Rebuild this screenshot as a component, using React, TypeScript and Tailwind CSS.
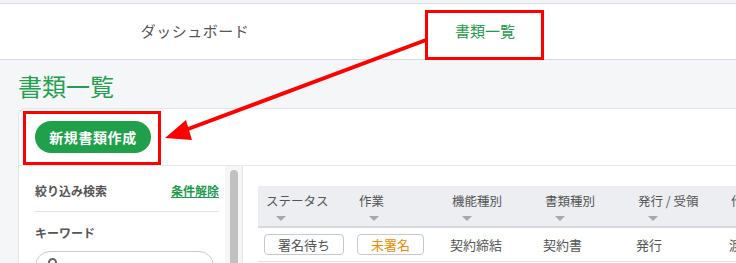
import React from "react";

const font = { fontFamily: '"Noto Sans CJK JP", "Noto Sans", sans-serif' };

function Tri() {
  return <div className="mt-[6px] w-0 h-0 border-l-[5px] border-r-[5px] border-t-[5px] border-l-transparent border-r-transparent border-t-[#a5a9af] ml-[10px]" />;
}

export default function App() {
  const cols = ["ステータス", "作業", "機能種別", "書類種別", "発行 / 受領", "作成者"];
  return (
    <div className="relative w-[736px] h-[263px] overflow-hidden bg-[#f5f6f8] text-[#444]" style={font}>
      <div className="h-[4px] bg-[#f3f4f7] border-b border-[#d9dce2]" />
      <div className="h-[56px] bg-white border-b border-[#d5d8de] flex items-center pl-[50px] text-[15px]">
        <div className="w-[290px] text-center text-[#555] tracking-[0.5px]">ダッシュボード</div>
        <div className="w-[290px] text-center text-[#1e9a4c]">書類一覧</div>
      </div>
      <div className="h-[48px] pl-[18px] flex items-center text-[24px] text-[#22a04e] leading-none pt-[4px]">書類一覧</div>
      <div className="ml-[18px] bg-white border-t border-l border-[#e3e5e9] rounded-tl-[8px] h-[200px]">
        <div className="h-[57px] border-b border-[#e6e8eb] pl-[16px] pt-[12px]">
          <div className="w-[116px] h-[32px] rounded-full bg-[#20a04b] text-white text-[14px] font-bold flex items-center justify-center tracking-[0.6px]">新規書類作成</div>
        </div>
        <div className="flex h-[140px]">
          <div className="w-[206px] shrink-0 pl-[16px] pr-[6px] pt-[16px]">
            <div className="flex justify-between items-center h-[18px] text-[12px] font-bold">
              <span className="text-[#555]">絞り込み検索</span>
              <span className="text-[#1e9a4c] underline">条件解除</span>
            </div>
            <div className="mt-[11px] border-t border-[#dfe1e4]" />
            <div className="mt-[12px] text-[12px] font-bold text-[#555]">キーワード</div>
            <div className="mt-[9px] w-[179px] h-[30px] rounded-full border border-[#c9cbcf] relative">
              <div className="absolute left-[12px] top-[6px] w-[9px] h-[9px] rounded-full border-2 border-[#666]" />
            </div>
          </div>
          <div className="w-[17px] shrink-0 bg-[#f6f6f6] flex justify-center pt-[4px]">
            <div className="w-[8px] h-[120px] rounded-full bg-[#c1c1c1]" />
          </div>
          <div className="border-l border-[#e3e5e9] pl-[15px] pt-[20px] flex-1 min-w-0">
            <div className="flex h-[42px] bg-[#eceef1] border-b-2 border-[#d6d9de] text-[12.5px] text-[#555]">
              {cols.map((c) => (
                <div key={c} className="w-[93px] shrink-0 pl-[8px] pt-[6px]">
                  <div className="leading-[18px] whitespace-nowrap">{c}</div>
                  <Tri />
                </div>
              ))}
            </div>
            <div className="flex h-[34px] border-b border-[#e0e2e5] text-[13px] text-[#555] items-center">
              <div className="w-[93px] shrink-0 pl-[6px]">
                <div className="w-[80px] h-[21px] border border-[#c6c9ce] rounded-[4px] flex items-center justify-center">署名待ち</div>
              </div>
              <div className="w-[93px] shrink-0 pl-[6px]">
                <div className="w-[67px] h-[21px] border border-[#c6c9ce] rounded-[4px] flex items-center justify-center text-[#f08a00]">未署名</div>
              </div>
              <div className="w-[93px] shrink-0 pl-[6px]">契約締結</div>
              <div className="w-[93px] shrink-0 pl-[6px]">契約書</div>
              <div className="w-[93px] shrink-0 pl-[6px]">発行</div>
              <div className="w-[93px] shrink-0 pl-[6px] whitespace-nowrap">渡辺</div>
            </div>
          </div>
        </div>
      </div>
      {/* annotations */}
      <div className="absolute left-[425px] top-[10px] w-[119px] h-[50px] border-[3px] border-[#ff0000]" />
      <div className="absolute left-[23px] top-[111px] w-[138px] h-[54px] border-[3px] border-[#ff0000]" />
      <svg className="absolute left-0 top-0" width="736" height="263">
        <line x1="426" y1="40" x2="180" y2="132" stroke="#ff0000" strokeWidth="4" />
        <polygon points="165,138 186,120 192,140" fill="#ff0000" />
      </svg>
    </div>
  );
}
